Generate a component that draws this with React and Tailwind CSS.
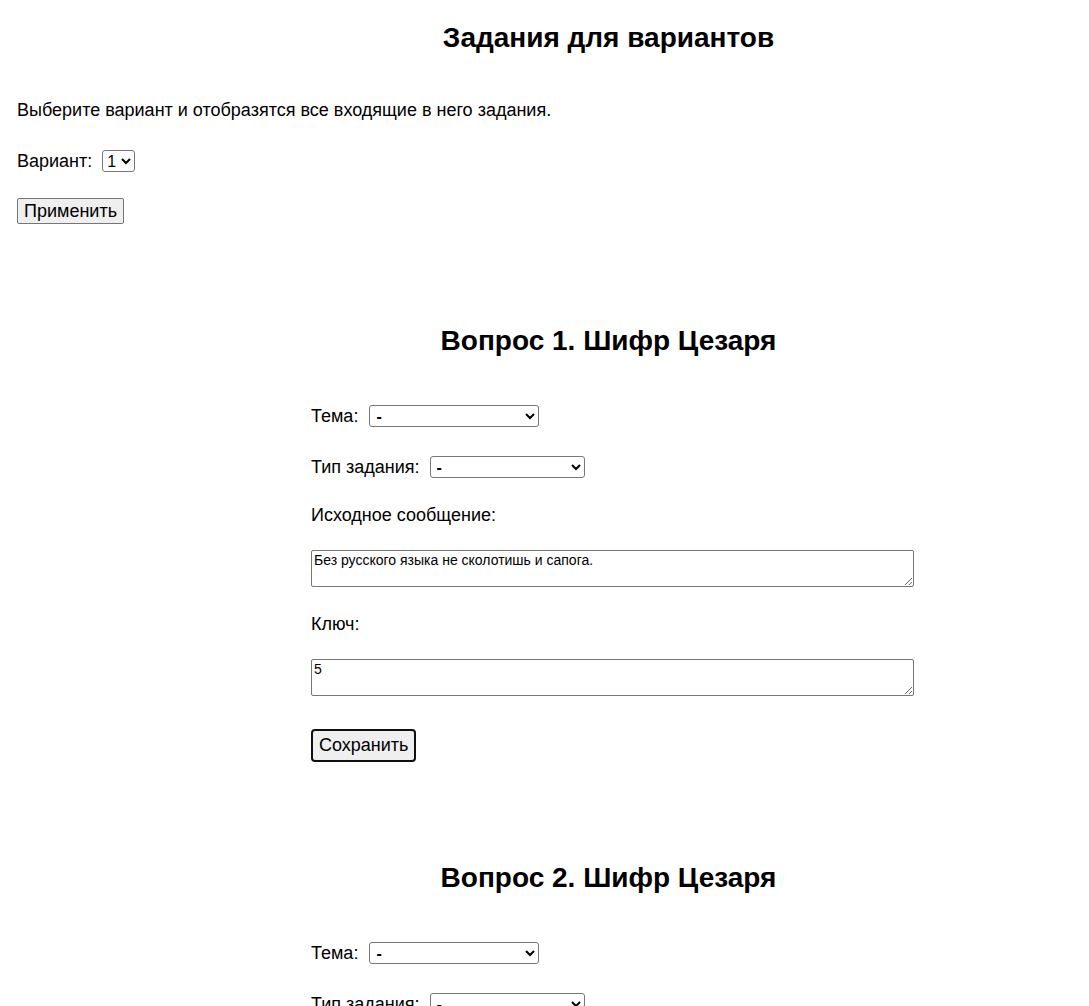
import React from 'react'

const Question = ({ num, message, keyValue, first }) => (
  <section>
    <h2 className={`${first ? 'mt-[103px]' : 'mt-[102px]'} h-[28px] leading-[28px] pl-[128px] text-center text-[28px] font-bold`}>
      Вопрос {num}. Шифр Цезаря
    </h2>
    <div className="pl-[311px]">
      <div className="mt-[50px] h-[22px] flex items-center">
        <label className="mr-[11px]">Тема:</label>
        <select className="w-[170px] h-[22px] text-[16px] font-bold border border-[#767676] rounded-[3px] bg-white pl-[2px]">
          <option>-</option>
        </select>
      </div>
      <div className="mt-[29px] h-[22px] flex items-center">
        <label className="mr-[10px]">Тип задания:</label>
        <select className="w-[155px] h-[22px] text-[16px] font-bold border border-[#767676] rounded-[3px] bg-white pl-[2px]">
          <option>-</option>
        </select>
      </div>
      {message !== undefined && (
        <>
          <p className="mt-[27px] h-[20px] leading-[20px]">Исходное сообщение:</p>
          <textarea
            defaultValue={message}
            className="block mt-[25px] w-[603px] h-[37px] text-[14px] leading-[16px] px-[2px] py-[1px] border border-[#767676] rounded-[2px] bg-white"
          />
          <p className="mt-[27px] h-[20px] leading-[20px]">Ключ:</p>
          <textarea
            defaultValue={keyValue}
            className="block mt-[25px] w-[603px] h-[37px] text-[14px] leading-[16px] px-[2px] py-[1px] border border-[#767676] rounded-[2px] bg-white"
          />
          <button className="block mt-[33px] h-[33px] px-[6px] text-[18px] bg-[#efefef] border-2 border-[#101010] rounded-[4px]">
            Сохранить
          </button>
        </>
      )}
    </div>
  </section>
)

export default function App() {
  return (
    <div className="bg-white text-black text-[18px] min-h-[1006px] overflow-hidden" style={{ fontFamily: '"Liberation Sans", Arial, sans-serif' }}>
      <h2 className="mt-[24px] h-[28px] leading-[28px] pl-[128px] text-center text-[28px] font-bold">
        Задания для вариантов
      </h2>
      <div className="pl-[17px]">
        <p className="mt-[48px] h-[20px] leading-[20px]">
          Выберите вариант и отобразятся все входящие в него задания.
        </p>
        <div className="mt-[30px] h-[22px] flex items-center">
          <label className="mr-[10px]">Вариант:</label>
          <select className="w-[33px] h-[22px] text-[16px] border border-[#767676] rounded-[3px] bg-white">
            <option>1</option>
          </select>
        </div>
        <button className="block mt-[26px] h-[26px] px-[6px] text-[18px] leading-[20px] bg-[#efefef] border border-[#767676] rounded-[2px]">
          Применить
        </button>
      </div>
      <Question num={1} first message="Без русского языка не сколотишь и сапога." keyValue="5" />
      <Question num={2} />
    </div>
  )
}
